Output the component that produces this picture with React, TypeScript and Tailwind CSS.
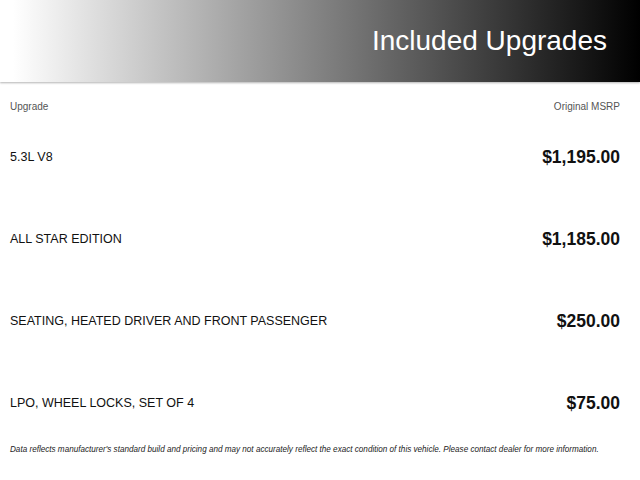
const upgrades = [
  { name: '5.3L V8', price: '$1,195.00' },
  { name: 'ALL STAR EDITION', price: '$1,185.00' },
  { name: 'SEATING, HEATED DRIVER AND FRONT PASSENGER', price: '$250.00' },
  { name: 'LPO, WHEEL LOCKS, SET OF 4', price: '$75.00' },
]

export default function App() {
  return (
    <div className="w-[640px] h-[480px] overflow-hidden bg-white font-['Liberation_Sans',Arial,sans-serif]">
      <div className="flex h-[82px] items-center justify-end bg-[linear-gradient(to_right,#fff_2%,#000_100%)] pr-[33px] shadow-[0_1px_2px_rgba(0,0,0,0.3)]">
        <h1 className="text-[28px] leading-none text-white">Included Upgrades</h1>
      </div>

      <div className="flex h-[48px] items-center justify-between pl-[10px] pr-[20px] text-[10px] text-[#555]">
        <span>Upgrade</span>
        <span>Original MSRP</span>
      </div>

      <div className="flex flex-col gap-[30px] pt-px">
        {upgrades.map((u) => (
          <div key={u.name} className="flex h-[52px] items-center justify-between pl-[10px] pr-[20px]">
            <span className="text-[12.5px] text-[#111]">{u.name}</span>
            <span className="text-[17.5px] font-bold text-[#111]">{u.price}</span>
          </div>
        ))}
      </div>

      <p className="whitespace-nowrap pl-[10px] pt-[15px] text-[8.15px] italic leading-[12px] text-[#222]">
        Data reflects manufacturer's standard build and pricing and may not accurately reflect the exact condition of this vehicle. Please contact dealer for more information.
      </p>
    </div>
  )
}
